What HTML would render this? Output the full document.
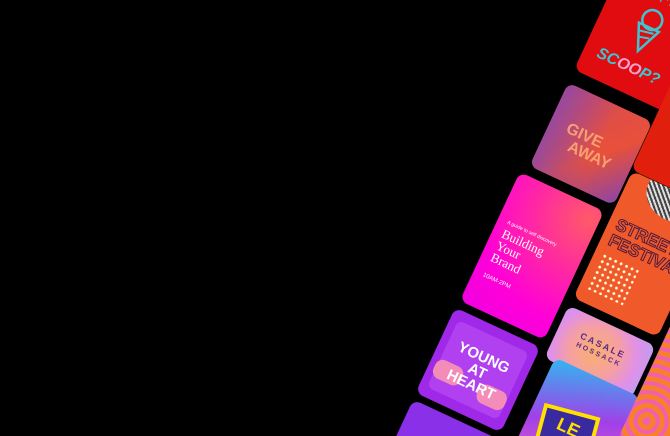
<!DOCTYPE html>
<html><head><style>
html,body{margin:0;padding:0;background:#000;width:670px;height:436px;overflow:hidden;font-family:"Liberation Sans",sans-serif}
#w{position:relative;width:670px;height:436px;overflow:hidden;background:#000}
.c{position:absolute;border-radius:8px;transform:translate(-50%,-50%) rotate(25deg);overflow:hidden}
</style></head><body><div id="w">

<div class="c" style="left:643px;top:40px;width:100px;height:112px;background:#e00c10">
  <div style="position:absolute;left:20px;top:6px;color:#3fc3d0;font-size:9px;font-weight:bold;letter-spacing:2px">WHAT'S THE</div>
  <svg style="position:absolute;left:35px;top:22px" width="30" height="50" viewBox="0 0 30 50"><circle cx="15" cy="12" r="10" fill="none" stroke="#3fc3d0" stroke-width="2.5"/><path d="M4 20 L15 46 L26 20Z" fill="none" stroke="#3fc3d0" stroke-width="2.5"/><path d="M7 27L22 24M9 33L20 30" stroke="#3fc3d0" stroke-width="2"/></svg>
  <div style="position:absolute;left:14px;top:78px;color:#3fc3d0;font-size:16px;font-weight:bold;font-style:italic">SC<span style="color:#f6a0d0">OO</span>P?</div>
</div>

<div class="c" style="left:700px;top:140px;width:100px;height:112px;background:#e0200c"></div>

<div class="c" style="left:591px;top:144px;width:93px;height:92px;background:linear-gradient(135deg,#d24a5a,#e8503a 60%,#8a45a8 100%)">
  <div style="position:absolute;inset:0;background:linear-gradient(90deg,#8848b0 0%,rgba(136,72,176,0) 60%);opacity:.8"></div>
  <div style="position:absolute;left:18px;top:34px;color:#f7a070;font-size:16px;font-weight:bold;line-height:16px">GIVE<br>&nbsp;&nbsp;AWAY</div>
</div>

<div class="c" style="left:532px;top:256px;width:93px;height:142px;background:radial-gradient(circle at 90% 10%,#ff5a68 0%,#ff2aa0 35%,#ff00d8 70%,#f000e0 100%)">
  <div style="position:absolute;left:10px;top:48px;color:#fff;font-size:5px">A guide to self discovery</div>
  <div style="position:absolute;left:10px;top:56px;color:#fff;font-family:'Liberation Serif',serif;font-size:13px;line-height:13px">Building<br>Your<br>Brand</div>
  <div style="position:absolute;left:10px;top:106px;color:#fff;font-size:6px">10AM-2PM</div>
</div>

<div class="c" style="left:478px;top:370px;width:94px;height:94px;background:#a028e8">
  <div style="position:absolute;left:8px;top:10px;width:78px;height:74px;border-radius:6px;background:#b040f0"></div>
  <div style="position:absolute;left:6px;top:52px;width:30px;height:20px;background:#f38cb8;border-radius:8px"></div>
  <div style="position:absolute;left:56px;top:56px;width:30px;height:20px;background:#f38cb8;border-radius:8px"></div>
  <div style="position:absolute;left:0;width:100%;top:26px;text-align:center;color:#fff;font-size:15px;font-weight:bold;line-height:15px">YOUNG<br>AT<br>HEART</div>
</div>

<div class="c" style="left:436px;top:462px;width:94px;height:94px;background:#8a30e8"></div>

<div class="c" style="left:645px;top:254px;width:93px;height:140px;background:#f05a2a">
  <div style="position:absolute;left:20px;top:-20px;width:60px;height:50px;border-radius:50%;background:repeating-linear-gradient(45deg,#ddd 0 2px,#444 2px 4px)"></div>
  <div style="position:absolute;left:8px;top:46px;color:#f05a2a;-webkit-text-stroke:1px #4a1a40;font-size:17px;font-weight:bold;line-height:17px">STREET<br>FESTIVAL</div>
  <div style="position:absolute;left:8px;top:86px;width:40px;height:40px;background:radial-gradient(circle,#ffd 1.2px,transparent 1.6px) 0 0/6px 6px"></div>
</div>

<div class="c" style="left:600px;top:352px;width:96px;height:58px;background:radial-gradient(circle at 45% 55%,#f8b070 0%,#f6a0a0 40%,#e090e8 70%,#b8a0f0 100%)">
  <div style="position:absolute;left:0;width:100%;top:18px;text-align:center;color:#5a2a8a;font-size:9px;font-weight:bold;letter-spacing:2px;line-height:9px">CASALE<br><span style="font-size:7px">HOSSACK</span></div>
</div>

<div class="c" style="left:578px;top:420px;width:94px;height:94px;background:linear-gradient(160deg,#30b8f0,#a040e8 50%,#f060c0)">
  <div style="position:absolute;left:14px;top:40px;width:50px;height:50px;border:4px solid #ffe000;background:#3a2aa0;transform:rotate(-10deg)"></div>
  <div style="position:absolute;left:30px;top:48px;color:#ffe000;font-size:18px;font-weight:bold">LE</div>
</div>

<div class="c" style="left:690px;top:395px;width:94px;height:140px;background:repeating-radial-gradient(circle at 20% 80%,#f060b0 0 4px,#f8802a 4px 9px)"></div>

</div></body></html>
